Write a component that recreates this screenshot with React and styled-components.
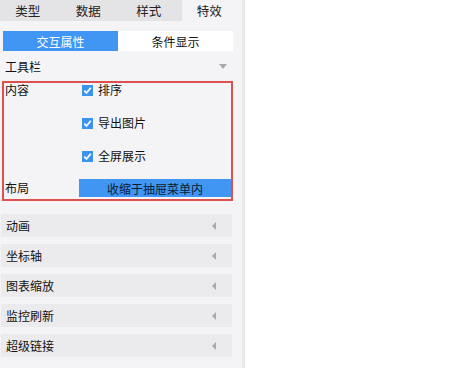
import React from 'react';
import styled, { createGlobalStyle } from 'styled-components';

const Global = createGlobalStyle`
  html, body {
    margin: 0;
    padding: 0;
    background: #fff;
  }
  body {
    font-family: "Noto Sans CJK SC", "Liberation Sans", sans-serif;
    font-size: 12px;
    color: #111;
  }
`;

const Panel = styled.div`
  width: 242px;
  height: 368px;
  background: #f4f4f6;
  border-right: 3px solid #eaeaed;
  overflow: hidden;
`;

const TabBar = styled.div`
  display: grid;
  grid-template-columns: repeat(4, 1fr);
  height: 21px;
  background: #e4e4e6;
`;

const Tab = styled.div`
  display: flex;
  align-items: center;
  justify-content: center;
  padding-right: 5px;
  font-size: 12.5px;
  color: #222;
  background: ${p => (p.$active ? '#f4f4f6' : 'transparent')};
`;

const SubTabs = styled.div`
  display: flex;
  height: 20px;
  margin: 10px 9px 0 3px;
`;

const SubTab = styled.div`
  flex: 1;
  display: flex;
  align-items: center;
  justify-content: center;
  font-size: 12px;
  background: ${p => (p.$active ? '#4096f2' : '#fff')};
  color: ${p => (p.$active ? '#fff' : '#111')};
`;

const SectionHead = styled.div`
  display: flex;
  align-items: center;
  justify-content: space-between;
  height: 18px;
  margin-top: 6px;
  padding: 0 15px 0 5px;
`;

const Box = styled.div`
  margin: 6px 9px 0 2px;
  border: 2px solid #dd5050;
  padding: 0 0 2px 0;
`;

const Row = styled.div`
  display: grid;
  grid-template-columns: 74px 1fr;
  margin-top: ${p => p.$mt || 0}px;
  align-items: ${p => p.$align || 'start'};
`;

const Label = styled.div`
  padding-left: 1px;
  line-height: 14px;
`;

const Options = styled.div`
  display: flex;
  flex-direction: column;
  gap: 19px;
  padding-left: 4px;
`;

const Option = styled.label`
  display: flex;
  align-items: center;
  gap: 5px;
  height: 14px;
  line-height: 14px;
`;

const Select = styled.div`
  height: 18px;
  display: flex;
  align-items: center;
  justify-content: center;
  background: #4096f2;
  color: #0d1a33;
  margin-left: 1px;
`;

const Accordion = styled.div`
  display: flex;
  flex-direction: column;
  gap: 7px;
  margin: 13px 10px 0 1px;
`;

const AccHead = styled.div`
  display: flex;
  align-items: center;
  justify-content: space-between;
  height: 23px;
  padding: 0 16px 0 5px;
  background: #ebebed;
`;

const Check = () => (
  <svg width="11" height="11" viewBox="0 0 11 11">
    <rect width="11" height="11" fill="#3a93ee" />
    <path d="M2.3 5.6 L4.5 7.9 L8.8 2.8" fill="none" stroke="#fff" strokeWidth="1.7" />
  </svg>
);

const Down = () => (
  <svg width="8" height="5" viewBox="0 0 8 5">
    <path d="M0 0 H8 L4 5 Z" fill="#aaaaad" />
  </svg>
);

const Left = () => (
  <svg width="4" height="8" viewBox="0 0 4 8">
    <path d="M4 0 V8 L0 4 Z" fill="#aaaaad" />
  </svg>
);

const sections = ['动画', '坐标轴', '图表缩放', '监控刷新', '超级链接'];

export default function App() {
  return (
    <>
      <Global />
      <Panel>
        <TabBar>
          <Tab>类型</Tab>
          <Tab>数据</Tab>
          <Tab>样式</Tab>
          <Tab $active>特效</Tab>
        </TabBar>
        <SubTabs>
          <SubTab $active>交互属性</SubTab>
          <SubTab>条件显示</SubTab>
        </SubTabs>
        <SectionHead>
          <span>工具栏</span>
          <Down />
        </SectionHead>
        <Box>
          <Row>
            <Label>内容</Label>
            <Options>
              <Option><Check />排序</Option>
              <Option><Check />导出图片</Option>
              <Option><Check />全屏展示</Option>
            </Options>
          </Row>
          <Row $mt={16} $align="center">
            <Label>布局</Label>
            <Select>收缩于抽屉菜单内</Select>
          </Row>
        </Box>
        <Accordion>
          {sections.map(s => (
            <AccHead key={s}>
              <span>{s}</span>
              <Left />
            </AccHead>
          ))}
        </Accordion>
      </Panel>
    </>
  );
}
